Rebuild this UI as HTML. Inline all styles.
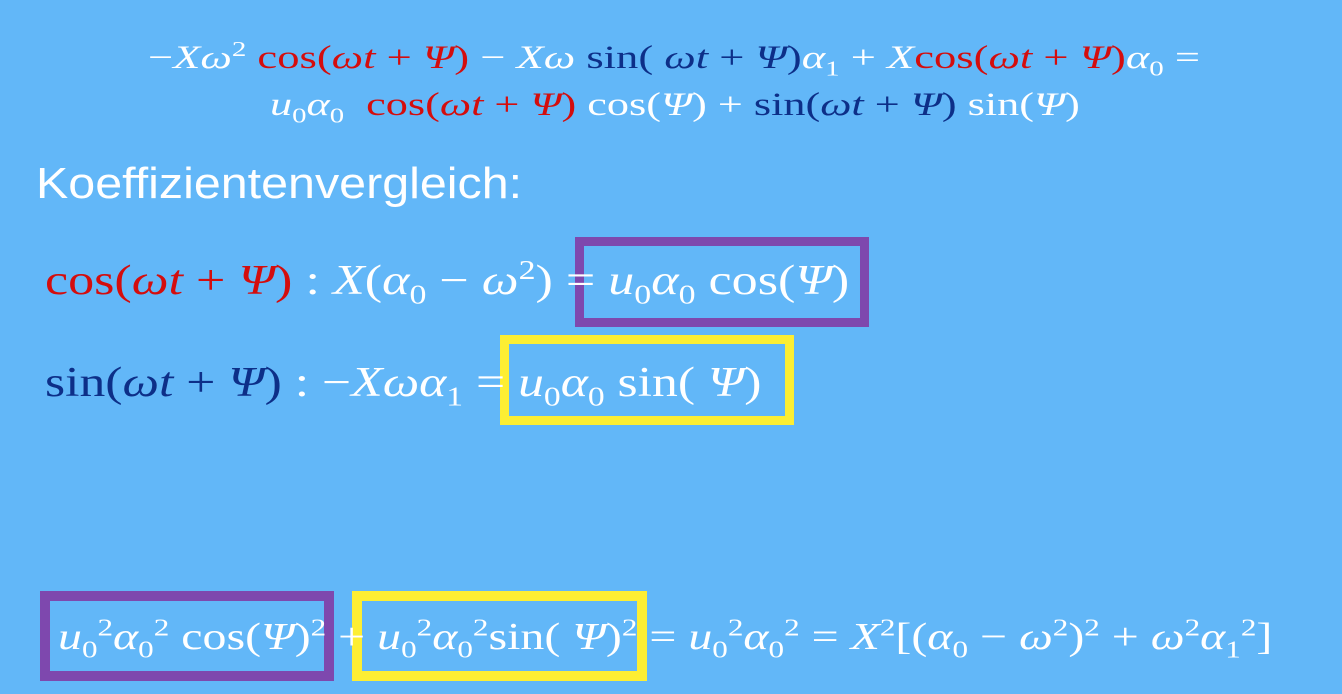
<!DOCTYPE html>
<html><head><meta charset="utf-8"><style>
html,body{margin:0;padding:0}
body{width:1342px;height:694px;background:#62b7f8;position:relative;overflow:hidden;font-family:"Liberation Serif",serif;color:#fff}
.l{position:absolute;white-space:nowrap;transform-origin:left top;line-height:1}
i{font-style:italic}
.r{color:#d40d0d}.b{color:#0d2f88}
sub,sup{font-size:65%;line-height:0}
.box{position:absolute;box-sizing:border-box}
.p{border:9px solid #7e48ae}.y{border:9px solid #fdee33}
.k{font-family:"Liberation Sans",sans-serif;font-size:44px}
</style></head><body>
<div class="box p" style="left:575px;top:237px;width:294px;height:90px"></div>
<div class="box y" style="left:500px;top:335px;width:294px;height:90px"></div>
<div class="box p" style="left:40px;top:591px;width:294px;height:90px;border-width:10px"></div>
<div class="box y" style="left:352px;top:591px;width:295px;height:90px;border-width:10px"></div>

<div class="l" style="left:148px;top:42px;font-size:33px;transform:scaleX(1.35)">−<i>Xω</i><sup>2</sup> <span class="r">cos(<i>ωt</i> + <i>Ψ</i>)</span> − <i>Xω</i> <span class="b">sin( <i>ωt</i> + <i>Ψ</i>)</span><i>α</i><sub>1</sub> + <i>X</i><span class="r">cos(<i>ωt</i> + <i>Ψ</i>)</span><i>α</i><sub>0</sub> =</div>
<div class="l" style="left:270px;top:89px;font-size:33px;transform:scaleX(1.34)"><i>u</i><sub>0</sub><i>α</i><sub>0</sub> &nbsp;<span class="r">cos(<i>ωt</i> + <i>Ψ</i>)</span> cos(<i>Ψ</i>) + <span class="b">sin(<i>ωt</i> + <i>Ψ</i>)</span> sin(<i>Ψ</i>)</div>

<div class="l k" style="left:36px;top:162px;transform:scaleX(1.1)">Koeffizientenvergleich:</div>

<div class="l" style="left:45px;top:260px;font-size:42px;transform:scaleX(1.24)"><span class="r">cos(<i>ωt</i> + <i>Ψ</i>)</span> : <i>X</i>(<i>α</i><sub>0</sub> − <i>ω</i><sup>2</sup>) = <i>u</i><sub>0</sub><i>α</i><sub>0</sub> cos(<i>Ψ</i>)</div>
<div class="l" style="left:45px;top:362px;font-size:42px;transform:scaleX(1.23)"><span class="b">sin(<i>ωt</i> + <i>Ψ</i>)</span> : −<i>Xωα</i><sub>1</sub> = <i>u</i><sub>0</sub><i>α</i><sub>0</sub> sin( <i>Ψ</i>)</div>

<div class="l" style="left:58px;top:618px;font-size:38px;transform:scaleX(1.26)"><i>u</i><sub>0</sub><sup>2</sup><i>α</i><sub>0</sub><sup>2</sup> cos(<i>Ψ</i>)<sup>2</sup> + <i>u</i><sub>0</sub><sup>2</sup><i>α</i><sub>0</sub><sup>2</sup>sin( <i>Ψ</i>)<sup>2</sup> = <i>u</i><sub>0</sub><sup>2</sup><i>α</i><sub>0</sub><sup>2</sup> = <i>X</i><sup>2</sup>[(<i>α</i><sub>0</sub> − <i>ω</i><sup>2</sup>)<sup>2</sup> + <i>ω</i><sup>2</sup><i>α</i><sub>1</sub><sup>2</sup>]</div>
</body></html>
